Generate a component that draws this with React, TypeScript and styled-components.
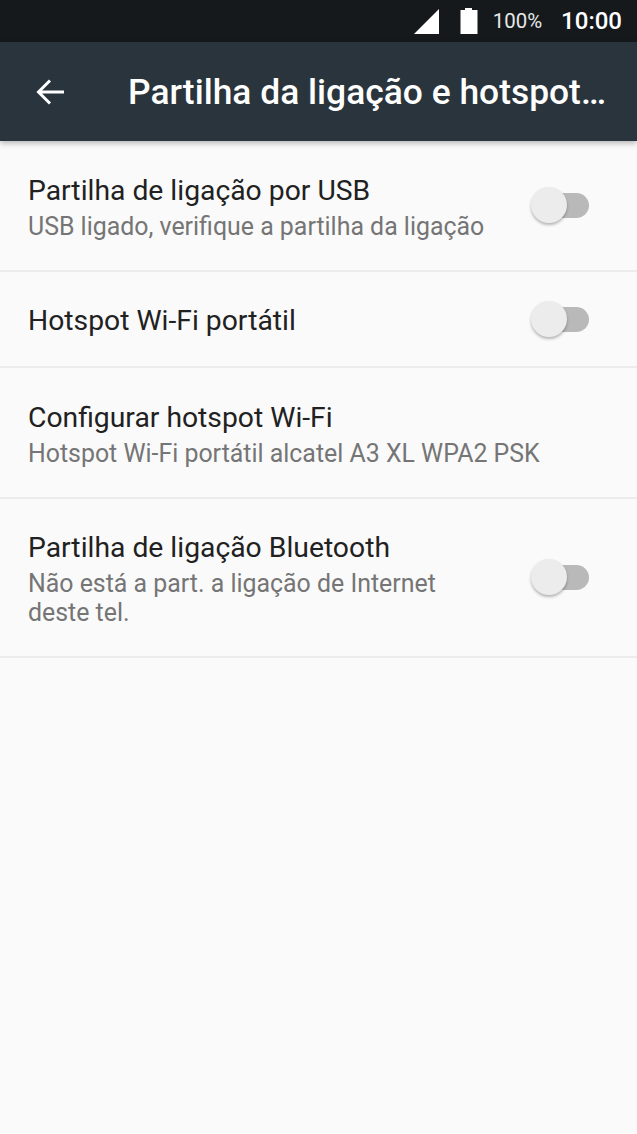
import React from "react"
import styled, { createGlobalStyle } from "styled-components"

const GlobalStyle = createGlobalStyle`
  html, body {
    margin: 0;
    padding: 0;
    background: #fafafa;
    font-family: Roboto, "Noto Sans", sans-serif;
  }
`

const Screen = styled.div`
  width: 637px;
  height: 1134px;
  overflow: hidden;
  background: #fafafa;
`

const StatusBar = styled.div`
  height: 42px;
  background: #15191c;
  display: flex;
  align-items: center;
  justify-content: flex-end;
  padding-right: 15px;
  color: #fff;
`

const BatteryIcon = styled.svg`
  margin-left: 21px;
`

const Percent = styled.span`
  font-size: 20.4px;
  margin-left: 15px;
  color: #e8e8e8;
`

const Clock = styled.span`
  font-size: 24px;
  font-weight: 500;
  margin-left: 19px;
`

const Toolbar = styled.header`
  height: 99px;
  background: #29343c;
  display: flex;
  align-items: center;
  box-shadow: 0 2px 6px rgba(0, 0, 0, 0.3);
  position: relative;
`

const BackButton = styled.div`
  width: 128px;
  padding-left: 36px;
  box-sizing: border-box;
  display: flex;
  align-items: center;
`

const Title = styled.h1`
  margin: 0;
  font-size: 35.4px;
  font-weight: 500;
  color: #fff;
  white-space: nowrap;
`

const Row = styled.div<{ $height: number }>`
  height: ${(p) => p.$height}px;
  box-sizing: border-box;
  border-bottom: 2px solid #ececec;
  padding: 0 48px 0 28px;
  display: flex;
  align-items: center;
  justify-content: space-between;
`

const RowText = styled.div`
  display: flex;
  flex-direction: column;
  gap: 4px;
  padding-top: 3px;
`

const RowTitle = styled.div`
  font-size: 28.3px;
  line-height: 34px;
  color: #212121;
`

const RowSub = styled.div`
  font-size: 24.9px;
  line-height: 29px;
  color: #757575;
`

const Switch = styled.div`
  position: relative;
  width: 50px;
  height: 25px;
  margin-left: 50px;
  border-radius: 13px;
  background: #b9b9b9;
  flex-shrink: 0;
`

const Thumb = styled.div`
  position: absolute;
  left: -8px;
  top: -6px;
  width: 36px;
  height: 36px;
  border-radius: 50%;
  background: #ececec;
  box-shadow: 0 2px 3px rgba(0, 0, 0, 0.28);
`

const Toggle = () => (
  <Switch>
    <Thumb />
  </Switch>
)

export default function App() {
  return (
    <Screen>
      <GlobalStyle />
      <StatusBar>
        <svg width="25" height="25" viewBox="0 0 25 25">
          <path d="M25 0V25H0Z" fill="#fff" />
        </svg>
        <BatteryIcon width="18" height="26" viewBox="0 0 18 26">
          <path d="M5 0H12V2H17.5V26H0.5V2H5Z" fill="#fff" />
        </BatteryIcon>
        <Percent>100%</Percent>
        <Clock>10:00</Clock>
      </StatusBar>
      <Toolbar>
        <BackButton>
          <svg width="28" height="28" viewBox="0 0 28 28" fill="none" stroke="#fff" strokeWidth="3">
            <path d="M28 14H3M14 2.5L2.5 14L14 25.5" />
          </svg>
        </BackButton>
        <Title>Partilha da ligação e hotspot…</Title>
      </Toolbar>
      <Row $height={131}>
        <RowText>
          <RowTitle>Partilha de ligação por USB</RowTitle>
          <RowSub>USB ligado, verifique a partilha da ligação</RowSub>
        </RowText>
        <Toggle />
      </Row>
      <Row $height={96}>
        <RowText>
          <RowTitle>Hotspot Wi-Fi portátil</RowTitle>
        </RowText>
        <Toggle />
      </Row>
      <Row $height={131}>
        <RowText>
          <RowTitle>Configurar hotspot Wi-Fi</RowTitle>
          <RowSub>Hotspot Wi-Fi portátil alcatel A3 XL WPA2 PSK</RowSub>
        </RowText>
      </Row>
      <Row $height={159}>
        <RowText>
          <RowTitle>Partilha de ligação Bluetooth</RowTitle>
          <RowSub>Não está a part. a ligação de Internet deste tel.</RowSub>
        </RowText>
        <Toggle />
      </Row>
    </Screen>
  )
}
